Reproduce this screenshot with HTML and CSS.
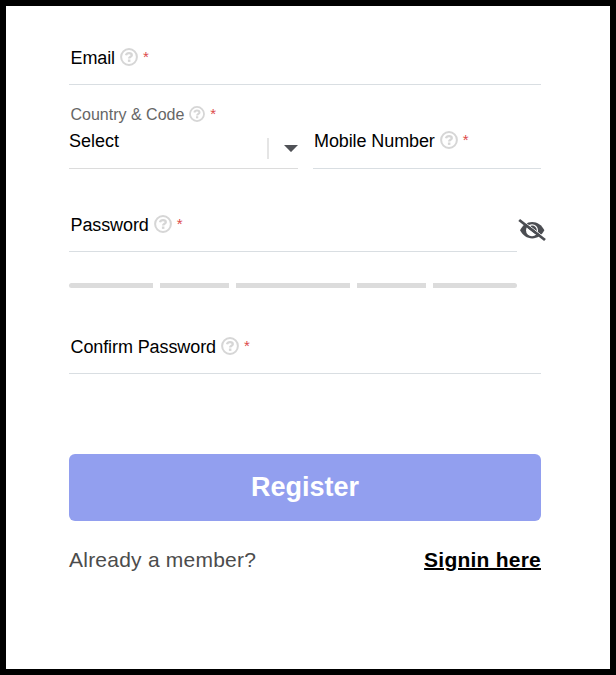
FILE: index.html
```html
<!DOCTYPE html>
<html lang="en">
<head>
<meta charset="utf-8">
<title>Register</title>
<link rel="stylesheet" href="styles.css">
</head>
<body>
<svg class="defs" aria-hidden="true">
  <symbol id="help" viewBox="0 0 18 18">
    <circle cx="9" cy="9" r="7.9" fill="none" stroke="currentColor" stroke-width="2"/>
    <path d="M6 7.300C6.400 5.700 7.400 5.100 9 5.100c1.800 0 2.800.8 2.800 2.100C11.800 8.800 9.100 8.700 9.100 10.600" fill="none" stroke="currentColor" stroke-width="2.300"/>
    <path d="M7.900 11.500h2.500v2.400H7.900z" fill="currentColor"/>
  </symbol>
</svg>
<form class="form">
  <div class="field email">
    <label class="label">Email <svg class="help"><use href="#help"/></svg><span class="req">*</span></label>
  </div>
  <div class="row">
    <div class="field country">
      <label class="label small">Country &amp; Code <svg class="help"><use href="#help"/></svg><span class="req">*</span></label>
      <div class="select">
        <span class="value">Select</span>
        <span class="divider"></span>
        <svg class="caret" viewBox="0 0 14 7"><path d="M0 0h14L7.600 6.600q-.6.6-1.200 0z" fill="#505257"/></svg>
      </div>
    </div>
    <div class="field mobile">
      <label class="label">Mobile Number <svg class="help"><use href="#help"/></svg><span class="req">*</span></label>
    </div>
  </div>
  <div class="password-row">
    <div class="field password">
      <label class="label">Password <svg class="help"><use href="#help"/></svg><span class="req">*</span></label>
    </div>
    <svg class="eye" viewBox="0 0 28 24">
      <path d="M2 12.300C4.800 7 9 4 14.200 4S23.600 7 26.400 12.300C23.600 17.500 19.400 20.400 14.200 20.400S4.800 17.500 2 12.300z" fill="#4b4d52"/>
      <circle cx="14" cy="12.200" r="6" fill="#fff"/>
      <path d="M14.200 7.600a4.600 4.600 0 0 1 4.600 4.600c0 1.500-.7 2.800-1.700 3.600L9.800 10.200a4.600 4.600 0 0 1 4.400-2.600z" fill="#4b4d52"/>
      <path d="M2.200.7L28 20.700" stroke="#fff" stroke-width="1"/>
      <path d="M1.200 2L27 22" stroke="#4b4d52" stroke-width="2.800"/>
    </svg>
  </div>
  <div class="strength"><span></span><span></span><span></span><span></span><span></span></div>
  <div class="field confirm">
    <label class="label">Confirm Password <svg class="help"><use href="#help"/></svg><span class="req">*</span></label>
  </div>
  <button class="register" type="button">Register</button>
  <div class="footer">
    <span>Already a member?</span>
    <a class="signin" href="#">Signin here</a>
  </div>
</form>
</body>
</html>
```
FILE: styles.css
```css
* { box-sizing: border-box; }
body {
  margin: 0;
  height: 675px;
  border: 6px solid #000;
  background: #fff;
  color: #000;
  font-family: "Liberation Sans", Arial, sans-serif;
  font-size: 18px;
}
.defs { position: absolute; width: 0; height: 0; }
.form {
  display: flex;
  flex-direction: column;
  margin: 0 69px 0 63px;
  padding-top: 41px;
}
.field { border-bottom: 1px solid #d9dee2; }
.label {
  display: flex;
  height: 20px;
  padding-left: 1.5px;
  line-height: 22px;
  letter-spacing: -.1px;
  white-space: nowrap;
}
.help {
  flex: none;
  width: 18px;
  height: 18px;
  margin: 1px 0 0 5px;
  color: #d6d6d6;
}
.req { margin-left: 5px; color: #dc4949; font-size: 15px; line-height: 20px; }
.email { height: 38px; }
.row {
  display: grid;
  grid-template-columns: 229px 228px;
  gap: 15px;
  height: 84px;
}
.country { padding-top: 19px; border-color: #dcdcdc; }
.small { color: #666; font-size: 16px; letter-spacing: 0; }
.small .help { width: 16px; height: 16px; margin-top: 2px; }
.select { display: flex; height: 44px; }
.value { flex: 1; line-height: 34px; }
.divider { width: 2px; height: 21px; margin-top: 14px; background: #e5e5e5; }
.caret { width: 14px; height: 7px; margin: 21px 0 0 15px; }
.mobile { padding-top: 45px; }
.mobile .label { padding-left: 1px; }
.password-row { display: flex; margin-top: 45px; }
.password { flex: none; width: 448px; height: 38px; }
.eye { flex: none; width: 28px; height: 24px; margin: 4px -6px 0 1px; }
.strength {
  display: grid;
  grid-template-columns: 84px 69px 114px 69px 84px;
  gap: 7px;
  height: 5px;
  margin-top: 31px;
}
.strength span { background: #dcdcdc; }
.strength span:first-child { border-radius: 3px 0 0 3px; }
.strength span:last-child { border-radius: 0 3px 3px 0; }
.confirm { height: 38px; margin-top: 48px; }
.register {
  height: 67px;
  margin-top: 80px;
  padding: 0;
  border: 0;
  border-radius: 6px;
  background: #929fef;
  color: #fff;
  font: bold 27px "Liberation Sans", Arial, sans-serif;
}
.footer {
  display: flex;
  justify-content: space-between;
  margin-top: 27px;
  color: #4c4c4c;
  font-size: 21px;
  line-height: 24px;
  letter-spacing: .23px;
}
.signin { color: #000; font-weight: bold; text-decoration-thickness: 2px; }
```
